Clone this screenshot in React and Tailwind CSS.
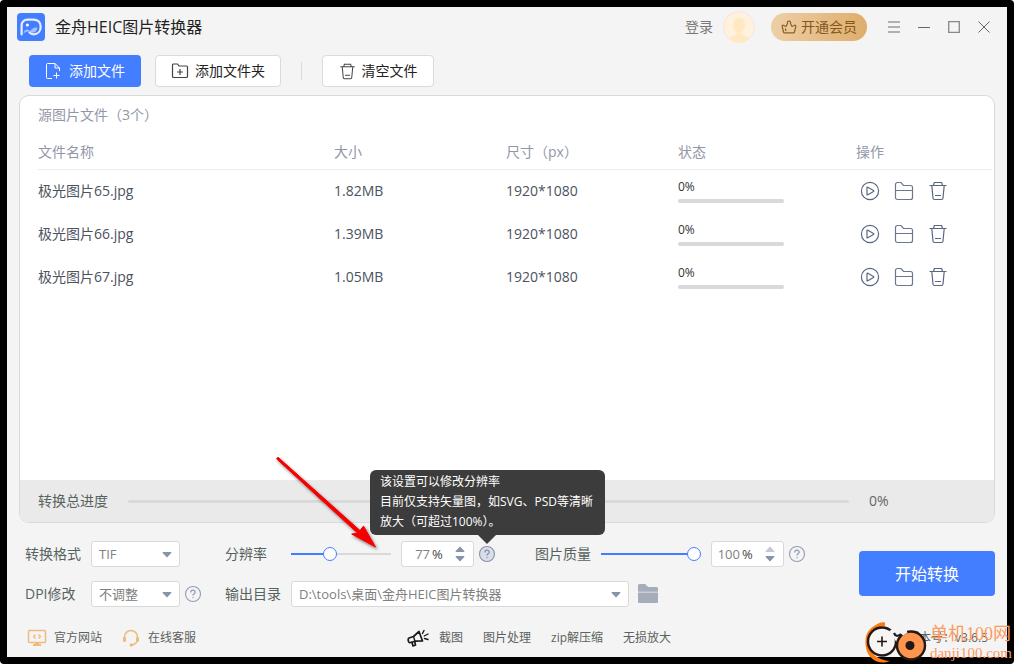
import React, { useState } from "react";

const files = [
  { name: "极光图片65.jpg", size: "1.82MB", dim: "1920*1080" },
  { name: "极光图片66.jpg", size: "1.39MB", dim: "1920*1080" },
  { name: "极光图片67.jpg", size: "1.05MB", dim: "1920*1080" },
];

function Logo() {
  return (
    <svg width="28" height="28" viewBox="0 0 28 28" fill="none" aria-hidden="true">
      <rect width="28" height="28" rx="4" fill="#427eff" />
      <path d="M4.600 21.500V12.500C4.600 9 7 6.600 10.500 6.600H16.500C21 6.600 23.700 9.500 23.700 13.700S21 21.300 16.500 21.300C14.500 21.300 13.500 20.500 12.500 19.500" stroke="#e6eeff" strokeWidth="2.200" strokeLinecap="round" />
      <path d="M6.500 20.500C7.500 16 10 15.500 13 18C15 16 17.500 13.500 20.500 15C19.800 18.500 17 20 14.500 19.800C12 18 8.500 18 6.500 21Z" fill="#a3c0ff" />
      <circle cx="10.400" cy="12" r="1.500" fill="#fff" />
    </svg>
  );
}

function FileAddIcon() {
  return (
    <svg width="16" height="18" viewBox="0 0 16 18" fill="none" stroke="#fff" strokeWidth="1" aria-hidden="true">
      <path d="M7 16.500H2.500A1 1 0 0 1 1.500 15.500V2.500A1 1 0 0 1 2.500 1.500H10L14.500 6V9" />
      <path d="M10 1.500V6H14.500M11.500 10.500V16.500M8.500 13.500H14.500" />
    </svg>
  );
}

function FolderAddIcon() {
  return (
    <svg width="18" height="16" viewBox="0 0 18 16" fill="none" stroke="#444" strokeWidth="1.200" aria-hidden="true">
      <path d="M1.500 2A1 1 0 0 1 2.500 1H6.500L8 3H15.500A1 1 0 0 1 16.500 4V13.500A1 1 0 0 1 15.500 14.500H2.500A1 1 0 0 1 1.500 13.500Z" />
      <path d="M9 6V12M6 9H12" />
    </svg>
  );
}

function TrashIcon({ color, size }) {
  return (
    <svg width={size} height={size} viewBox="0 0 20 20" fill="none" stroke={color} strokeWidth="1.200" aria-hidden="true">
      <path d="M1.500 4.500H18.500M5.500 4.500L6.300 1.500H13.700L14.500 4.500M3.800 4.500L5 17A1.500 1.500 0 0 0 6.500 18.500H13.500A1.500 1.500 0 0 0 15 17L16.200 4.500M7 14.500H13" />
    </svg>
  );
}

function PlayIcon() {
  return (
    <svg width="20" height="20" viewBox="0 0 20 20" fill="none" stroke="#5b6782" strokeWidth="1.200" aria-hidden="true">
      <circle cx="10" cy="10" r="8.600" />
      <path d="M7 6.600V13.400Q7 14.200 7.800 13.800L13.500 10.500Q14.200 10 13.500 9.500L7.800 6.200Q7 5.800 7 6.600Z" strokeLinejoin="round" />
    </svg>
  );
}

function FolderIcon() {
  return (
    <svg width="20" height="20" viewBox="0 0 20 20" fill="none" stroke="#6b7790" strokeWidth="1.200" aria-hidden="true">
      <path d="M1.500 3.500A2 2 0 0 1 3.500 1.500H7L9.500 4.500H16.500A2 2 0 0 1 18.500 6.500V16.500A2 2 0 0 1 16.500 18.500H3.500A2 2 0 0 1 1.500 16.500ZM1.500 9.500H18.500" />
    </svg>
  );
}

function Triangle({ up, color = "#8793a8" }) {
  return (
    <svg width="10" height="7" viewBox="0 0 10 7" aria-hidden="true">
      <path d={up ? "M5 0.500L9.300 5Q9.800 6 8.800 6H1.200Q0.200 6 0.700 5Z" : "M5 6.500L9.300 2Q9.800 1 8.800 1H1.200Q0.200 1 0.700 2Z"} fill={color} />
    </svg>
  );
}

function HelpButton({ label, active }) {
  return (
    <button type="button" aria-label={label} className="block h-4 w-4">
      <svg width="16" height="16" viewBox="0 0 16 16" fill="none" stroke={active ? "#8492ac" : "#929db5"} strokeWidth="1.100" className="overflow-visible">
        <circle cx="8" cy="8" r="7.500" fill={active ? "#dadee7" : "none"} />
        <path d="M5.800 6.400C5.800 3.400 10.200 3.400 10.200 6.200C10.200 7.800 8 7.900 8 9.600" strokeWidth="1.300" />
        <circle cx="8" cy="11.600" r="0.500" strokeWidth="0.600" />
      </svg>
    </button>
  );
}

function Dropdown({ id, options, className }) {
  return (
    <div className={"relative " + className}>
      <select id={id} className="h-[26px] w-full appearance-none rounded-[3px] border border-[#d9d9d9] bg-white pr-6 pl-[7px] text-[13px] text-[#808080] outline-none">
        {options.map((o) => (
          <option key={o}>{o}</option>
        ))}
      </select>
      <span className="pointer-events-none absolute inset-y-0 right-2 flex items-center">
        <Triangle />
      </span>
    </div>
  );
}

function Slider({ id, value, max, onChange }) {
  const part = value / max;
  return (
    <input
      id={id}
      type="range"
      min="0"
      max={max}
      value={value}
      onChange={(e) => onChange(Number(e.target.value))}
      style={{ "--fill": `calc(7px + (100% - 14px) * ${part})` }}
      className="h-3.5 w-[100px] appearance-none bg-transparent [&::-webkit-slider-runnable-track]:h-0.5 [&::-webkit-slider-runnable-track]:bg-[linear-gradient(to_right,#427eff_var(--fill),#d9d9d9_var(--fill))] [&::-webkit-slider-thumb]:-mt-1.5 [&::-webkit-slider-thumb]:h-3.5 [&::-webkit-slider-thumb]:w-3.5 [&::-webkit-slider-thumb]:appearance-none [&::-webkit-slider-thumb]:rounded-full [&::-webkit-slider-thumb]:border [&::-webkit-slider-thumb]:border-[#427eff] [&::-webkit-slider-thumb]:bg-white"
    />
  );
}

function Percent({ label, value, max, onChange }) {
  const atMax = value >= max;
  return (
    <div className="ml-2.5 flex h-[26px] w-[73px] items-center rounded-[3px] border border-[#d9d9d9] bg-white text-[13px] text-[#666]">
      <input
        aria-label={label}
        value={value}
        onChange={(e) => onChange(Math.min(max, Number(e.target.value) || 0))}
        className="w-7 bg-transparent text-right text-[#808080] outline-none"
      />
      <span className="ml-0.5 text-[#444]">%</span>
      <div className="mr-2 ml-auto flex flex-col gap-0.5">
        <button type="button" aria-label={label + "增加"} onClick={() => onChange(Math.min(max, value + 1))}>
          <Triangle up color={atMax ? "#c3c9d4" : "#8793a8"} />
        </button>
        <button type="button" aria-label={label + "减少"} onClick={() => onChange(Math.max(0, value - 1))}>
          <Triangle />
        </button>
      </div>
    </div>
  );
}

function Tooltip() {
  return (
    <div role="tooltip" className="absolute bottom-[27px] -left-[109px] z-20 w-[235px] rounded-md bg-[#3c3c3c] px-2.5 pt-0.5 pb-[3px] text-xs leading-5 text-white">
      <p className="whitespace-nowrap">该设置可以修改分辨率</p>
      <p className="whitespace-nowrap">目前仅支持矢量图，如SVG、PSD等清晰</p>
      <p className="whitespace-nowrap">放大（可超过100%）。</p>
      <svg width="18" height="9" viewBox="0 0 18 9" className="absolute top-full left-[108px]" aria-hidden="true">
        <path d="M0 0H18L9 9Z" fill="#3c3c3c" />
      </svg>
    </div>
  );
}

function PointerArrow() {
  return (
    <svg width="120" height="110" viewBox="0 0 120 110" className="pointer-events-none absolute -top-[98px] -left-[23px] z-30" aria-hidden="true">
      <defs>
        <filter id="arrow-shadow" x="-20%" y="-20%" width="150%" height="150%">
          <feDropShadow dx="1.500" dy="2" stdDeviation="1.500" floodOpacity="0.5" />
        </filter>
      </defs>
      <path d="M8.500 9.800L10 8.200L92 81.500L95.500 77L107.500 98L83.700 85L89.500 84Z" fill="#f50505" stroke="#f50505" strokeLinejoin="round" filter="url(#arrow-shadow)" />
    </svg>
  );
}

function Watermark() {
  return (
    <div className="pointer-events-none absolute right-0.5 bottom-0 z-10 flex items-center gap-0.5 whitespace-nowrap">
      <svg width="64" height="42" viewBox="0 0 64 42" fill="none" aria-hidden="true">
        <path d="M21 0.500C17 -0.500 13 2 10 4C3 8 1 15 1.500 22C2 33 9 41 21 40.500L26 39C14 38 5 32 5 21C5 11 12 5 21 4Z" fill="#ff7a12" />
        <circle cx="18" cy="19.500" r="14" fill="#f6f5f4" stroke="#231815" strokeWidth="2.400" />
        <path d="M18 14.500V24.500M13 19.500H23" stroke="#231815" strokeWidth="1.600" />
        <path d="M27 8L34 19" stroke="#f4f4f4" strokeWidth="4" />
        <path d="M30 11Q32 16 37 12" stroke="#231815" strokeWidth="2.200" />
        <circle cx="47" cy="23.500" r="14" fill="#ff944d" stroke="#231815" strokeWidth="2.400" />
        <path d="M38 12.500A14 14 0 0 1 43 9.500" stroke="#f4f4f4" strokeWidth="3" />
        <circle cx="46" cy="23.500" r="4.500" fill="#231815" />
      </svg>
      <div className="text-[#fa9b62]">
        <p className="font-['Liberation_Serif','Noto_Sans_CJK_SC',serif] text-lg leading-5">单机100网</p>
        <p className="font-['Liberation_Serif',serif] text-[15px] leading-[18px]">danji100.com</p>
      </div>
    </div>
  );
}

export default function App() {
  const [resolution, setResolution] = useState(77);
  const [quality, setQuality] = useState(100);

  return (
    <div className="relative flex min-h-screen flex-col rounded-[4px] bg-black p-[7px] font-['Open_Sans','Noto_Sans_CJK_SC',sans-serif] text-sm text-[#56625e]">
      <main className="flex flex-1 flex-col bg-[#f4f4f4]">
        <header className="flex h-10 items-center pr-2 pl-2.5">
          <Logo />
          <h1 className="ml-2.5 text-base text-[#222]">金舟HEIC图片转换器</h1>
          <div className="ml-auto flex items-center">
            <button type="button" className="text-[#777]">登录</button>
            <svg width="32" height="32" viewBox="0 0 32 32" className="ml-2.5" aria-hidden="true">
              <circle cx="16" cy="16" r="15.500" fill="#fff2dc" stroke="#fde1e2" />
              <path d="M16 7C20 7 22 9.500 22 14C22 17.500 20.500 20 18.500 21V23.500C22 25 25 26 26 28A15.500 15.500 0 0 1 6 28C7 26 10 25 13.500 23.500V21C11.500 20 10 17.500 10 14C10 9.500 12 7 16 7Z" fill="#ffe8c2" />
            </svg>
            <button type="button" className="ml-4 flex h-7 w-24 items-center justify-center gap-1 rounded-full bg-linear-to-r from-[#edcfa7] to-[#dfad6b] text-[#85571b]">
              <svg width="16" height="14" viewBox="0 0 16 14" fill="none" stroke="#8f6024" strokeWidth="1.200" strokeLinejoin="round" aria-hidden="true">
                <path d="M3.500 12.800Q2.700 12.800 2.500 12L1.200 6.500Q1 5 2.300 5.200L5 6.500L6.500 3.500Q6 1.200 8 1.200T9.500 3.500L11 6.500L13.700 5.200Q15 5 14.800 6.500L13.500 12Q13.300 12.800 12.500 12.800Z" />
                <path d="M4.300 8.500L5 11" />
              </svg>
              开通会员
            </button>
            <div className="ml-3 flex">
              <button type="button" aria-label="菜单" className="flex h-7 w-[30px] items-center justify-center">
                <svg width="12" height="12" viewBox="0 0 12 12" stroke="#999" strokeWidth="1.700"><path d="M0 1H12M0 6H12M0 11H12" /></svg>
              </button>
              <button type="button" aria-label="最小化" className="flex h-7 w-[30px] items-center justify-center">
                <svg width="12" height="12" viewBox="0 0 12 12" stroke="#666"><path d="M0 6.500H12" /></svg>
              </button>
              <button type="button" aria-label="最大化" className="flex h-7 w-[30px] items-center justify-center">
                <svg width="12" height="12" viewBox="0 0 12 12" fill="none" stroke="#888" strokeWidth="1.300"><path d="M0.700 0.700H11.300V11.300H0.700Z" /></svg>
              </button>
              <button type="button" aria-label="关闭" className="flex h-7 w-[30px] items-center justify-center">
                <svg width="12" height="12" viewBox="0 0 12 12" stroke="#666"><path d="M0.500 0.500L11.500 11.500M11.500 0.500L0.500 11.500" /></svg>
              </button>
            </div>
          </div>
        </header>

        <div className="mt-2 flex items-center pl-[22px]">
          <button type="button" className="flex h-8 w-28 items-center justify-center gap-2 rounded-[4px] bg-[#427eff] text-white">
            <FileAddIcon />
            添加文件
          </button>
          <button type="button" className="ml-3.5 flex h-8 w-[126px] items-center justify-center gap-1.5 rounded-[4px] border border-[#d9dbe0] bg-white text-[#222]">
            <FolderAddIcon />
            添加文件夹
          </button>
          <span className="mx-5 h-[18px] w-px bg-[#d9d9d9]" />
          <button type="button" className="flex h-8 w-28 items-center justify-center gap-1.5 rounded-[4px] border border-[#d9dbe0] bg-white text-[#222]">
            <TrashIcon color="#444" size={17} />
            清空文件
          </button>
        </div>

        <section className="mx-3 mt-2 flex flex-1 flex-col overflow-hidden rounded-[10px] border border-[#d9d9d9] bg-white">
          <h2 className="mt-[7px] px-[18px] leading-6 text-[#9297a8]">源图片文件（3个）</h2>
          <div className="mt-[9px] pr-0.5 pl-[18px]">
            <table className="w-full table-fixed text-left">
              <thead>
                <tr className="h-[33px] border-b border-[#ededed] text-[#9297a8] [&>th]:font-normal">
                  <th>文件名称</th>
                  <th className="w-[172px]">大小</th>
                  <th className="w-[172px]">尺寸（px）</th>
                  <th className="w-[178px]">状态</th>
                  <th className="w-[136px]">操作</th>
                </tr>
              </thead>
              <tbody>
                {files.map((f) => (
                  <tr key={f.name} className="h-[43px] text-[#4c525e]">
                    <td>{f.name}</td>
                    <td>{f.size}</td>
                    <td>{f.dim}</td>
                    <td>
                      <div className="text-xs leading-4 text-[#333]">0%</div>
                      <div className="mt-1 h-1 w-[106px] rounded-full bg-[#d9d9d9]" />
                    </td>
                    <td>
                      <div className="flex gap-3.5 pl-1">
                        <button type="button" aria-label="转换"><PlayIcon /></button>
                        <button type="button" aria-label="打开文件夹"><FolderIcon /></button>
                        <button type="button" aria-label="删除"><TrashIcon color="#5b6782" size={20} /></button>
                      </div>
                    </td>
                  </tr>
                ))}
              </tbody>
            </table>
          </div>
          <div className="mt-auto flex h-[42px] items-center bg-[#eaeaea] pl-[18px]">
            <span>转换总进度</span>
            <div className="ml-5 h-[3px] flex-1 rounded-full bg-[#d9d9d9]" />
            <span className="ml-5 w-[125px] text-[#666]">0%</span>
          </div>
        </section>

        <form className="mt-[18px] flex items-start pr-3 pl-[18px]" onSubmit={(e) => e.preventDefault()}>
          <div className="flex flex-col gap-3.5">
            <div className="flex h-[26px] items-center">
              <label htmlFor="format" className="w-[66px]">转换格式</label>
              <Dropdown id="format" options={["TIF", "JPG", "PNG"]} className="w-[89px]" />
              <label htmlFor="resolution" className="ml-[45px] w-[66px]">分辨率</label>
              <div className="relative flex items-center">
                <Slider id="resolution" value={resolution} max={207} onChange={setResolution} />
                <PointerArrow />
              </div>
              <Percent label="分辨率百分比" value={resolution} max={207} onChange={setResolution} />
              <div className="relative ml-[5px]">
                <HelpButton label="分辨率说明" active />
                <Tooltip />
              </div>
              <label htmlFor="quality" className="ml-10 w-[66px]">图片质量</label>
              <Slider id="quality" value={quality} max={100} onChange={setQuality} />
              <Percent label="图片质量百分比" value={quality} max={100} onChange={setQuality} />
              <div className="ml-[5px]">
                <HelpButton label="图片质量说明" />
              </div>
            </div>
            <div className="flex h-[26px] items-center">
              <label htmlFor="dpi" className="w-[66px]">DPI修改</label>
              <Dropdown id="dpi" options={["不调整", "72", "300"]} className="w-[89px]" />
              <div className="ml-[5px]">
                <HelpButton label="DPI说明" />
              </div>
              <label htmlFor="output" className="ml-6 w-[66px]">输出目录</label>
              <Dropdown id="output" options={["D:\\tools\\桌面\\金舟HEIC图片转换器"]} className="w-[338px]" />
              <button type="button" aria-label="浏览文件夹" className="ml-[9px]">
                <svg width="20" height="20" viewBox="0 0 20 20" fill="#a5acba">
                  <path d="M0 2A2 2 0 0 1 2 0H7L10 3H18A2 2 0 0 1 20 5V19H0Z" fill="#c9cdd6" />
                  <path d="M0 2A2 2 0 0 1 2 0H7L10 3H18A2 2 0 0 1 20 5V7.500H0Z" />
                  <path d="M0 9H20V17A2 2 0 0 1 18 19H2A2 2 0 0 1 0 17Z" />
                </svg>
              </button>
            </div>
          </div>
          <button type="submit" className="mt-2.5 ml-auto h-[45px] w-[136px] rounded-[4px] bg-[#427eff] text-base text-white">开始转换</button>
        </form>

        <footer className="mt-2.5 flex h-10 items-center pt-0.5 pr-[19px] pl-5 text-xs text-[#5c6260]">
          <a href="#site" className="flex items-center gap-[7px]">
            <svg width="20" height="18" viewBox="0 0 20 18" fill="none" stroke="#eebb7c" strokeWidth="1.500" aria-hidden="true">
              <rect x="1.500" y="1.500" width="17" height="12" rx="1" />
              <path d="M8.500 5.500L6.500 7.500L8.500 9.500M11.500 5.500L13.500 7.500L11.500 9.500" strokeWidth="1.200" />
              <path d="M6 16H14M8 14.500H12" strokeWidth="2" />
            </svg>
            官方网站
          </a>
          <a href="#service" className="ml-5 flex items-center gap-2">
            <svg width="18" height="18" viewBox="0 0 18 18" fill="none" stroke="#eebb7c" strokeWidth="1.500" aria-hidden="true">
              <path d="M2.500 9V8A6.500 6.500 0 0 1 15.500 8V9" />
              <path d="M15 12.500Q13.500 15.500 10 16" />
              <rect x="1" y="8" width="3" height="5" rx="1.200" fill="#eebb7c" stroke="none" />
              <rect x="14" y="8" width="3" height="5" rx="1.200" fill="#eebb7c" stroke="none" />
              <circle cx="9.300" cy="16" r="1.700" fill="#eebb7c" stroke="none" />
            </svg>
            在线客服
          </a>
          <nav className="ml-[211px] flex items-center gap-5">
            <a href="#capture" className="flex items-center gap-2.5">
              <svg width="22" height="18" viewBox="0 0 22 18" fill="none" stroke="#1a1a1a" strokeWidth="1.700" strokeLinejoin="round" strokeLinecap="round" aria-hidden="true">
                <path d="M2 9L6.500 7.500L12 2.500L15.500 12L8 12.200L3.500 13.500Q2 14 1.500 12.500L1.200 11Q1 9.500 2 9Z" />
                <path d="M6.500 7.500L8 12.200" strokeWidth="1.300" />
                <path d="M5 13.500L6 17L8.500 16L7.800 13" />
                <path d="M15.500 4.500L17 1.500M17.200 7L21 5M17.500 9.500L21 10.500" strokeWidth="1.400" />
              </svg>
              截图
            </a>
            <a href="#process">图片处理</a>
            <a href="#zip">zip解压缩</a>
            <a href="#enlarge">无损放大</a>
          </nav>
          <span className="ml-auto">版本号：v3.6.5</span>
        </footer>
      </main>
      <Watermark />
    </div>
  );
}
